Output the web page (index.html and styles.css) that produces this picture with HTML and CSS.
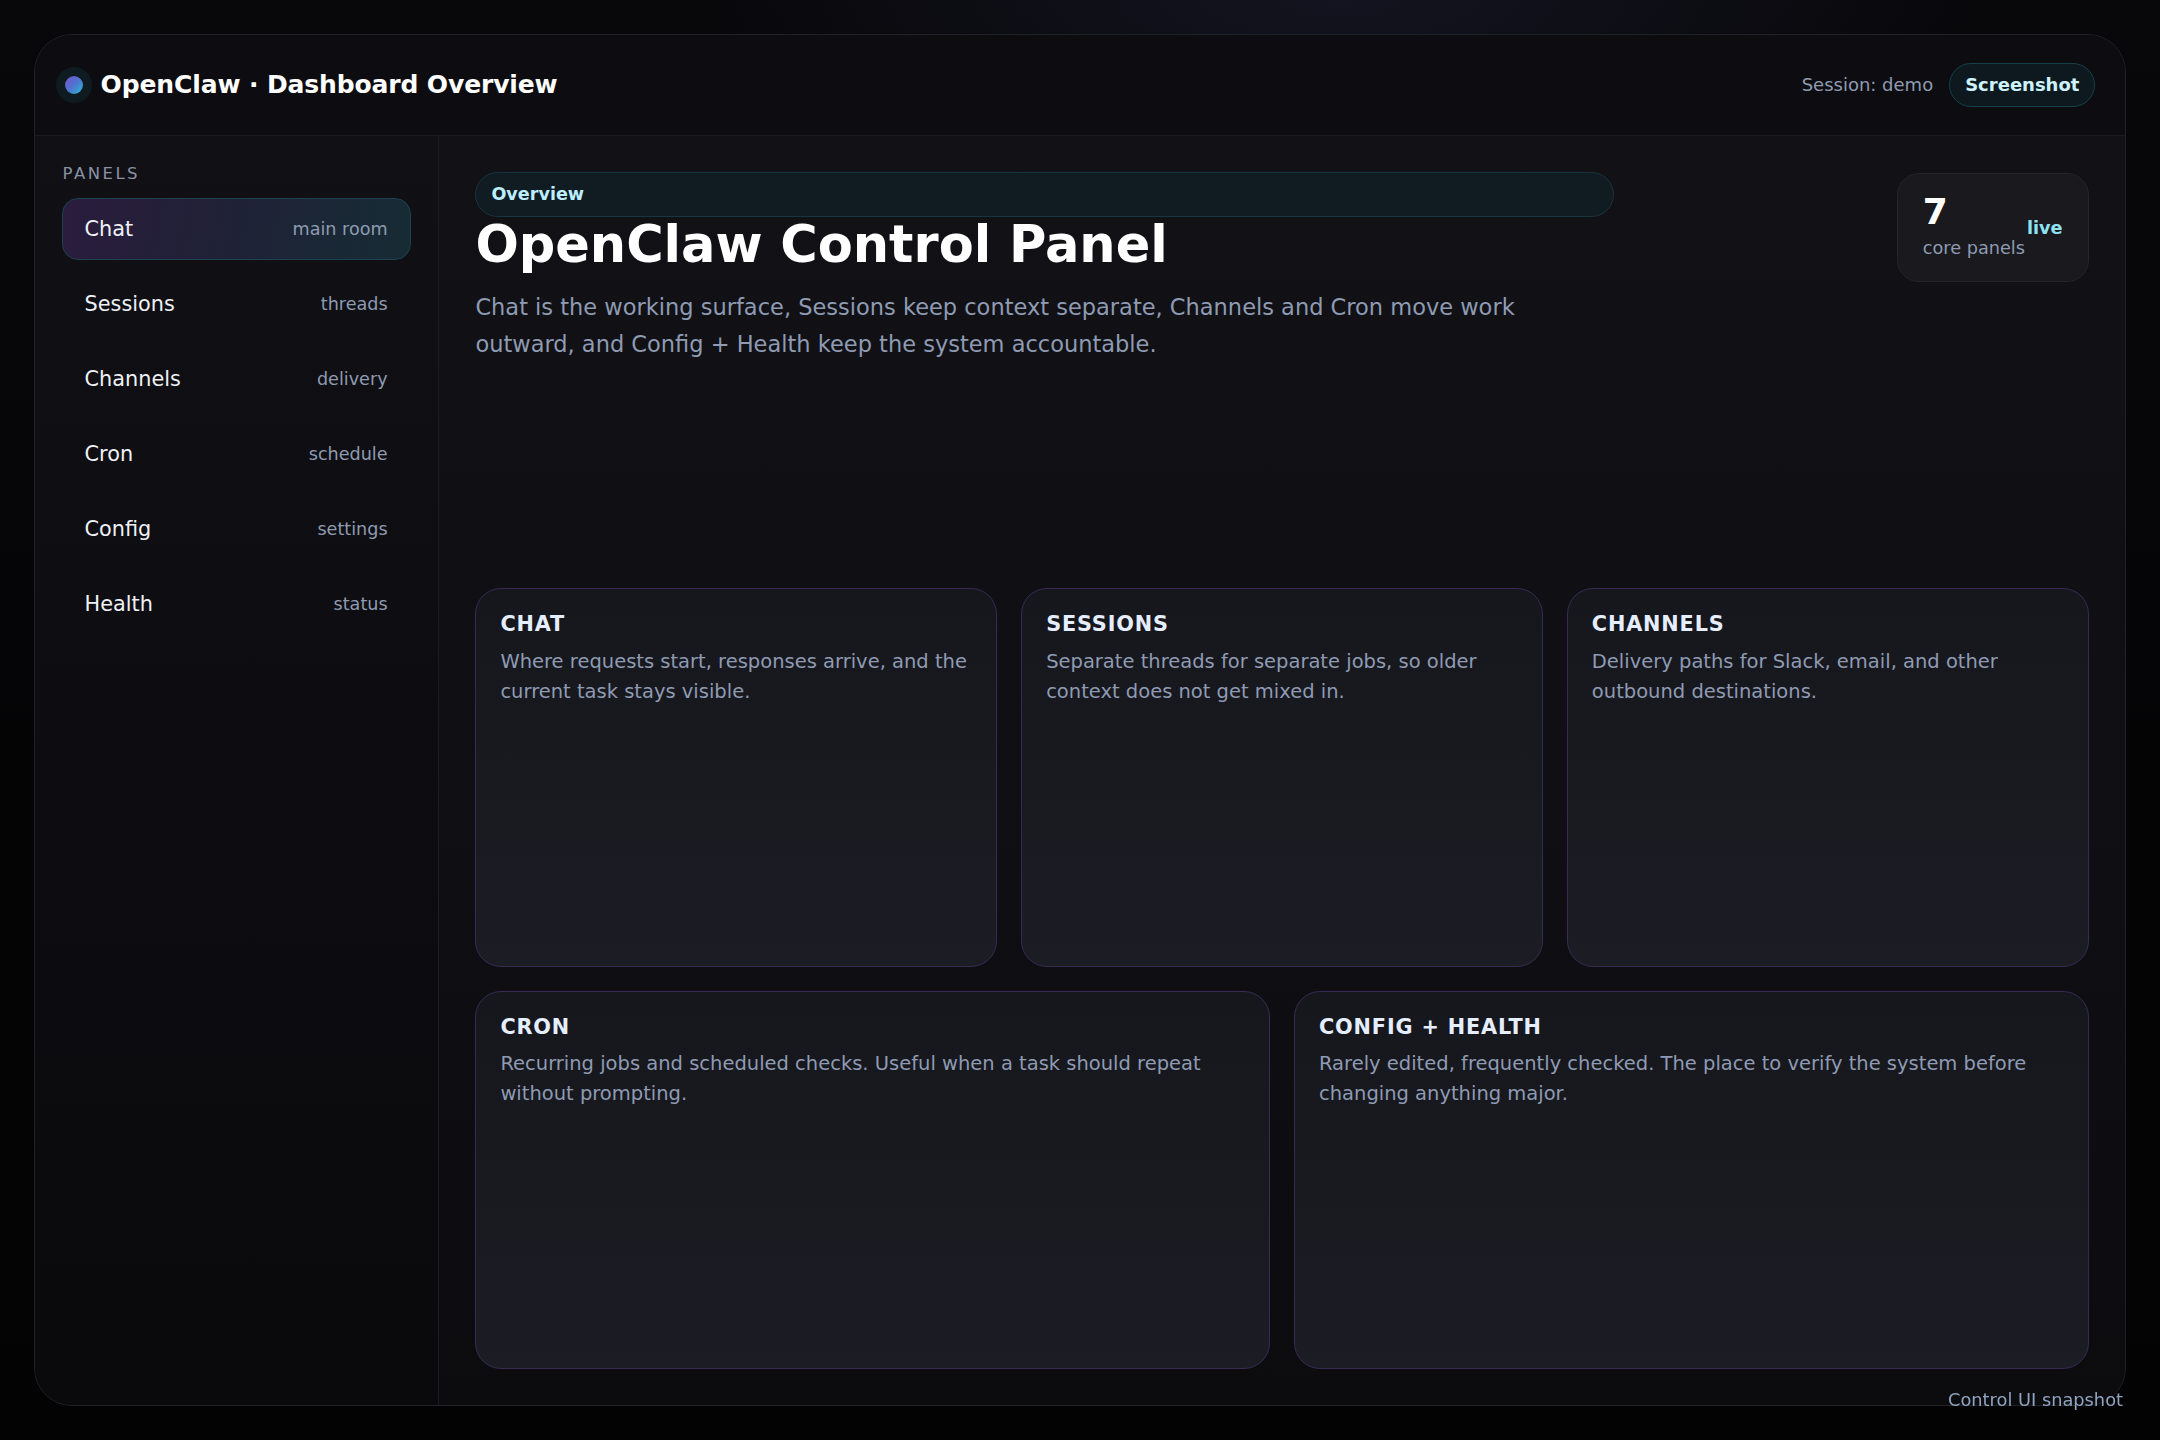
FILE: index.html
```html
<!DOCTYPE html>
<html lang="en">
<head>
<meta charset="utf-8">
<title>OpenClaw · Dashboard Overview</title>
<link rel="stylesheet" href="styles.css">
</head>
<body>
<div class="app">
  <header class="topbar">
    <div class="brand">
      <span class="dot"></span>
      <span class="brand-title">OpenClaw · Dashboard Overview</span>
    </div>
    <div class="top-actions">
      <span class="session">Session: demo</span>
      <span class="pill-btn">Screenshot</span>
    </div>
  </header>
  <div class="layout">
    <aside class="sidebar">
      <div class="side-label">Panels</div>
      <nav class="nav">
        <a class="nav-item active"><span class="nav-name">Chat</span><span class="nav-sub">main room</span></a>
        <a class="nav-item"><span class="nav-name">Sessions</span><span class="nav-sub">threads</span></a>
        <a class="nav-item"><span class="nav-name">Channels</span><span class="nav-sub">delivery</span></a>
        <a class="nav-item"><span class="nav-name">Cron</span><span class="nav-sub">schedule</span></a>
        <a class="nav-item"><span class="nav-name">Config</span><span class="nav-sub">settings</span></a>
        <a class="nav-item"><span class="nav-name">Health</span><span class="nav-sub">status</span></a>
      </nav>
    </aside>
    <main class="main">
      <section class="hero">
        <div class="hero-text">
          <div class="tag">Overview</div>
          <h1 class="title">OpenClaw Control Panel</h1>
          <p class="lead">Chat is the working surface, Sessions keep context separate, Channels and Cron move work outward, and Config + Health keep the system accountable.</p>
        </div>
        <div class="stat">
          <div class="stat-main">
            <div class="stat-num">7</div>
            <div class="stat-label">core panels</div>
          </div>
          <div class="stat-live">live</div>
        </div>
      </section>
      <section class="cards">
        <article class="card third">
          <h2 class="card-title">CHAT</h2>
          <p class="card-text">Where requests start, responses arrive, and the current task stays visible.</p>
        </article>
        <article class="card third">
          <h2 class="card-title">SESSIONS</h2>
          <p class="card-text">Separate threads for separate jobs, so older context does not get mixed in.</p>
        </article>
        <article class="card third">
          <h2 class="card-title">CHANNELS</h2>
          <p class="card-text">Delivery paths for Slack, email, and other outbound destinations.</p>
        </article>
        <article class="card half">
          <h2 class="card-title">CRON</h2>
          <p class="card-text">Recurring jobs and scheduled checks. Useful when a task should repeat without prompting.</p>
        </article>
        <article class="card half">
          <h2 class="card-title">CONFIG + HEALTH</h2>
          <p class="card-text">Rarely edited, frequently checked. The place to verify the system before changing anything major.</p>
        </article>
      </section>
    </main>
  </div>
</div>
<div class="caption">Control UI snapshot</div>
</body>
</html>
```

FILE: styles.css
```css
* { box-sizing: border-box; }

html, body {
  margin: 0;
  height: 100%;
}

body {
  padding: 33.6px;
  font-family: "DejaVu Sans", "Liberation Sans", sans-serif;
  color: #e8ecf4;
  background:
    radial-gradient(ellipse 900px 260px at 62% 0%, rgba(40, 42, 70, 0.35), transparent 70%),
    linear-gradient(180deg, #08080b 0%, #040405 60%, #030304 100%);
  overflow: hidden;
}

.app {
  height: 100%;
  display: flex;
  flex-direction: column;
  border: 1px solid #212128;
  border-radius: 38px;
  overflow: hidden;
  background: #0e0e12;
}

/* ---------- top bar ---------- */
.topbar {
  height: 101px;
  flex: 0 0 101px;
  display: flex;
  align-items: center;
  justify-content: space-between;
  padding: 0 30px;
  border-bottom: 1px solid #1b1b21;
  background: #0d0d11;
}

.brand {
  display: flex;
  align-items: center;
  gap: 18px;
}

.dot {
  width: 18px;
  height: 18px;
  border-radius: 50%;
  background: linear-gradient(135deg, #7650cc 0%, #4f74cf 50%, #26bdd6 100%);
  box-shadow: 0 0 0 9px #0e1b21;
}

.brand-title {
  font-size: 25px;
  font-weight: 700;
  letter-spacing: -0.005em;
  color: #ffffff;
}

.top-actions {
  display: flex;
  align-items: center;
  gap: 16px;
}

.session {
  font-size: 18px;
  color: #8e9bb1;
}

.pill-btn {
  font-size: 18px;
  line-height: 22px;
  font-weight: 700;
  color: #cdf3ff;
  padding: 10px 15px;
  border: 1px solid #16414b;
  border-radius: 999px;
  background: #0d191e;
}

/* ---------- layout ---------- */
.layout {
  flex: 1;
  display: grid;
  grid-template-columns: 404px 1fr;
  min-height: 0;
}

.sidebar {
  border-right: 1px solid #1c1c22;
  padding: 28px 27px 28px 27px;
  background: linear-gradient(180deg, #101015 0%, #0d0d11 50%, #0a0a0c 100%);
}

.side-label {
  font-size: 16.5px;
  line-height: 19.8px;
  letter-spacing: 0.15em;
  text-transform: uppercase;
  color: #8a92a6;
  padding-left: 1px;
  margin-bottom: 15px;
}

.nav {
  display: flex;
  flex-direction: column;
  gap: 13px;
}

.nav-item {
  height: 62px;
  display: flex;
  align-items: center;
  justify-content: space-between;
  padding: 0 22px 0 22px;
  border: 1px solid transparent;
  border-radius: 16px;
  color: #eef1f7;
  text-decoration: none;
}

.nav-item.active {
  border-color: #1d4350;
  background: linear-gradient(100deg, #2a1c3d 0%, #1f2236 50%, #162c35 100%);
}

.nav-name {
  font-size: 20.8px;
}

.nav-sub {
  font-size: 17.6px;
  color: #8e9bb1;
}

/* ---------- main ---------- */
.main {
  display: flex;
  flex-direction: column;
  padding: 36.8px;
  background: linear-gradient(180deg, #111116 0%, #0f0f13 60%, #0c0c0f 100%);
  min-height: 0;
}

.hero {
  min-height: 416px;
  display: flex;
  justify-content: space-between;
  align-items: flex-start;
  gap: 40px;
}

.hero-text {
  flex: 0 1 1139px;
  max-width: 1139px;
}

.tag {
  display: block;
  font-size: 17.6px;
  line-height: 21px;
  font-weight: 700;
  color: #bdeeff;
  padding: 11px 15px;
  border: 1px solid #18363f;
  border-radius: 999px;
  background: #101b22;
}

.title {
  margin: 0;
  font-size: 51px;
  line-height: 1.09;
  font-weight: 700;
  color: #ffffff;
}

.lead {
  margin: 16px 0 0;
  font-size: 22.5px;
  line-height: 1.655;
  color: #8e9bb3;
}

.stat {
  margin-top: 1px;
  display: flex;
  align-items: center;
  gap: 2px;
  padding: 20px 25px;
  border: 1px solid #25252b;
  border-radius: 22px;
  background: #19191e;
}

.stat-num {
  font-size: 36px;
  line-height: 1;
  font-weight: 700;
  color: #ffffff;
  margin-bottom: 6px;
}

.stat-label {
  font-size: 17.7px;
  line-height: 1.4;
  color: #8e9bb1;
}

.stat-live {
  font-size: 17.7px;
  font-weight: 700;
  color: #8fe2f4;
}

/* ---------- cards ---------- */
.cards {
  flex: 1;
  display: grid;
  grid-template-columns: repeat(6, 1fr);
  grid-template-rows: 1fr 1fr;
  gap: 24px;
  min-height: 0;
}

.card {
  padding: 24px;
  border: 1px solid #372a55;
  border-radius: 26px;
  background: linear-gradient(180deg, #16161d 0%, #191920 50%, #1c1c24 100%);
}

.card.third { grid-column: span 2; }
.card.half { grid-column: span 3; }

.card-title {
  margin: 0;
  font-size: 20.8px;
  line-height: 1.15;
  font-weight: 700;
  letter-spacing: 0.04em;
  color: #e4eeff;
}

.card-text {
  margin: 10px 0 0;
  font-size: 19.5px;
  line-height: 1.52;
  color: #8e9bb3;
}

/* ---------- caption ---------- */
.caption {
  position: fixed;
  right: 37px;
  bottom: 30px;
  font-size: 17.8px;
  line-height: 20px;
  color: #8fa4bf;
}
```
